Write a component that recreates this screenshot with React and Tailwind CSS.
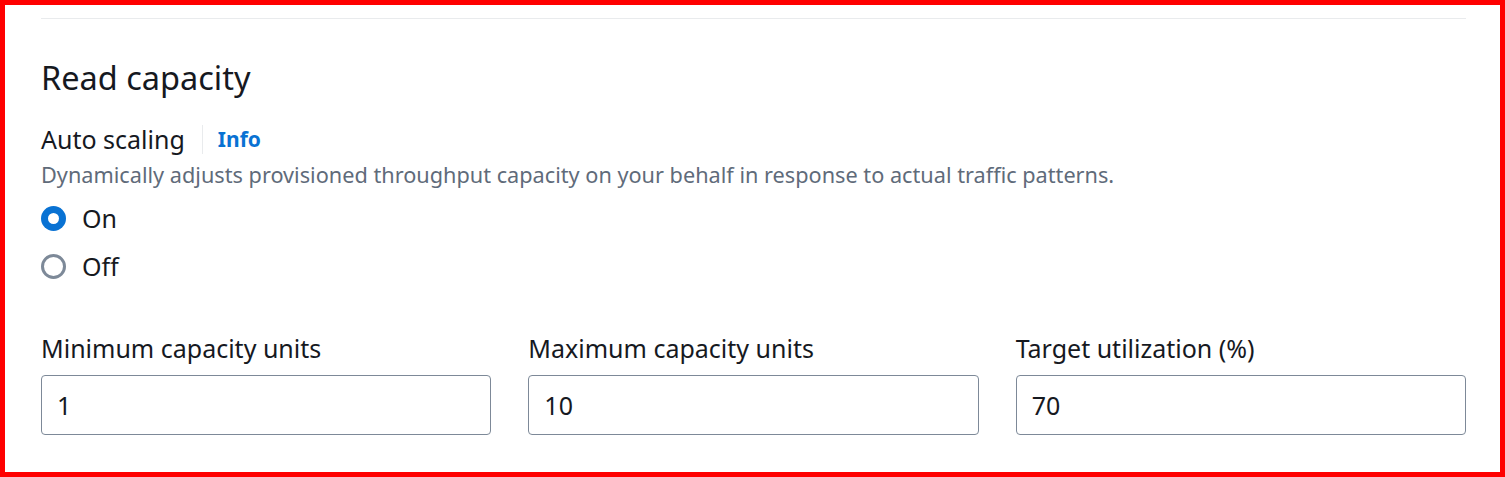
import { useState } from "react";

const fields = [
  { id: "min", label: "Minimum capacity units" },
  { id: "max", label: "Maximum capacity units" },
  { id: "target", label: "Target utilization (%)" },
];

const Radio = ({ checked, label, onClick }) => (
  <label className="flex items-center gap-[16px] h-[34px] cursor-pointer" onClick={onClick}>
    {checked ? (
      <span className="w-[25px] h-[25px] rounded-full bg-[#0972d3] flex items-center justify-center">
        <span className="w-[11px] h-[11px] rounded-full bg-white" />
      </span>
    ) : (
      <span className="w-[25px] h-[25px] rounded-full border-[3px] border-[#7d8998] bg-white" />
    )}
    <span>{label}</span>
  </label>
);

const App = () => {
  const [autoScaling, setAutoScaling] = useState(true);
  const [values, setValues] = useState({ min: "1", max: "10", target: "70" });

  return (
    <div className="w-[1505px] h-[477px] border-[5px] border-[#ff0000] bg-white pl-[36px] pr-[34px] font-['Noto_Sans',sans-serif] text-[#16191f] text-[25px] leading-[34px] overflow-hidden">
      <div className="mt-[13px] h-px bg-[#e9ebed]" />

      <h2 className="mt-[39px] text-[32.5px] leading-[40px] font-normal">Read capacity</h2>

      <div className="mt-[24px] flex items-center">
        <span>Auto scaling</span>
        <span className="ml-[17px] mr-[15px] w-px h-[29px] bg-[#e9ebed]" />
        <a href="#" className="font-bold text-[21px] text-[#0972d3]">Info</a>
      </div>
      <p className="mt-[5px] text-[21.7px] leading-[28px] text-[#5f6b7a]">
        Dynamically adjusts provisioned throughput capacity on your behalf in response to actual traffic patterns.
      </p>

      <div className="mt-[12px]">
        <Radio checked={autoScaling} label="On" onClick={() => setAutoScaling(true)} />
      </div>
      <div className="mt-[14px]">
        <Radio checked={!autoScaling} label="Off" onClick={() => setAutoScaling(false)} />
      </div>

      <div className="mt-[48px] grid grid-cols-3 gap-x-[37px]">
        {fields.map((f) => (
          <div key={f.id}>
            <label htmlFor={f.id} className="block">
              {f.label}
            </label>
            <input
              id={f.id}
              type="text"
              className="mt-[10px] block w-full h-[60px] border border-[#7d8998] rounded-[4px] px-[15px] leading-[34px] text-[#16191f] outline-none"
              value={values[f.id]}
              onChange={(e) => setValues({ ...values, [f.id]: e.target.value })}
            />
          </div>
        ))}
      </div>
    </div>
  );
};

export default App;
